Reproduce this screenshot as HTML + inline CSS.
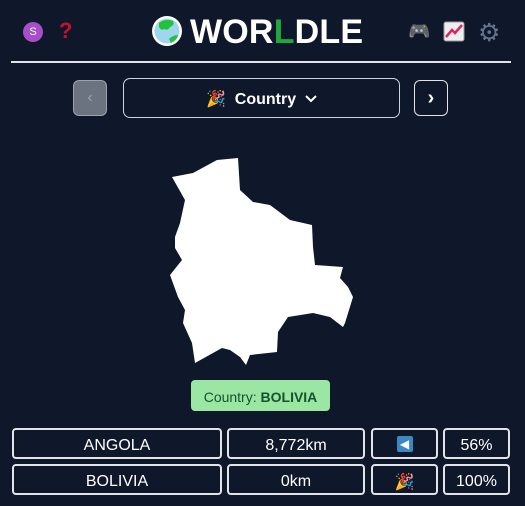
<!DOCTYPE html>
<html><head><meta charset="utf-8"><style>
*{box-sizing:border-box;margin:0;padding:0}
body{width:525px;height:506px;background:#0f172a;font-family:"Liberation Sans",sans-serif;color:#fff;position:relative;overflow:hidden}
.a{position:absolute}
.box{position:absolute;border:2px solid #e2e4e8;border-radius:4px;display:flex;align-items:center;justify-content:center;font-size:16px;padding-top:4px}
</style></head><body>
<div class="a" style="left:23px;top:22px;width:20px;height:20px;border-radius:50%;background:#a64fc8;font-size:11px;display:flex;align-items:center;justify-content:center">S</div>
<div class="a" style="left:59px;top:18px;font-size:22px;font-weight:bold;color:#c8102e">?</div>
<svg class="a" style="left:151px;top:15px" width="32" height="32" viewBox="0 0 32 32"><circle cx="16" cy="16" r="15" fill="#fff"/><circle cx="16" cy="16" r="12.5" fill="#9fd5ee"/><path d="M8 8 Q14 3 22 6 Q24 10 19 12 Q17 16 13 14 Q10 16 8 12Z" fill="#22c33a"/><path d="M18 24 Q22 20 27 20 Q26 25 20 28Z" fill="#22c33a"/></svg>
<div class="a" style="left:190px;top:13px;font-size:34px;font-weight:bold;letter-spacing:0.2px">WOR<span style="color:#1fa83e">L</span>DLE</div>
<div class="a" style="left:408px;top:21px;font-size:18px">🎮</div>
<svg class="a" style="left:443px;top:21px" width="22" height="21"><rect x="1" y="1" width="20" height="19" rx="2" fill="#eee" stroke="#999"/><path d="M3 16 L9 9 L12 12 L19 4" stroke="#e0245e" stroke-width="2.5" fill="none"/></svg>
<div class="a" style="left:478px;top:18px;font-size:25px;color:#64748b">⚙</div>
<div class="a" style="left:11px;top:61px;width:500px;height:2px;background:#e2e4e8"></div>
<div class="box" style="left:73px;top:80px;width:34px;height:36px;background:#6b7280;border-color:#9ca3af;color:#9ca3af;border-width:1px;border-radius:6px;padding:0">‹</div>
<div class="box" style="left:123px;top:78px;width:277px;height:40px;border-width:1px;border-color:#cbd5e1;border-radius:7px;font-weight:bold;font-size:16px;padding-top:2px">🎉&nbsp; Country &nbsp;<svg width="12" height="8"><path d="M1 1 L6 6 L11 1" stroke="#fff" stroke-width="2" fill="none"/></svg></div>
<div class="box" style="left:414px;top:80px;width:34px;height:36px;border-width:1px;border-radius:6px;font-size:20px;font-weight:bold;padding:0">›</div>
<svg class="a" style="left:0;top:0" width="525" height="400"><path fill="#fff" d="M172 177 L193 173 L217 160 L238 158 L240 190 L253 202 L270 205 L290 220 L312 225 L313 247 L315 265 L343 267 L340 278 L348 287 L353 297 L345 323 L343 327 L330 317 L313 313 L288 317 L278 332 L277 352 L250 355 L246 365 L240 357 L230 350 L222 348 L195 363 L192 343 L183 323 L185 310 L178 297 L170 275 L182 260 L175 248 L175 237 L180 223 L185 200Z"/></svg>
<div class="a" style="left:191px;top:380px;width:139px;height:31px;background:#9ae6a2;border-radius:4px;color:#14532d;font-size:14px;display:flex;align-items:center;justify-content:center;padding-top:2px">Country:&nbsp;<b>BOLIVIA</b></div>
<div class="box" style="left:12px;top:428px;width:210px;height:31px">ANGOLA</div>
<div class="box" style="left:227px;top:428px;width:138px;height:31px">8,772km</div>
<div class="box" style="left:371px;top:428px;width:67px;height:31px;padding-top:0"><span style="display:inline-block;width:16px;height:16px;background:#3b88c3;border-radius:2px;color:#fff;font-size:12px;line-height:16px;text-align:center">◀</span></div>
<div class="box" style="left:443px;top:428px;width:67px;height:31px">56%</div>
<div class="box" style="left:12px;top:464px;width:210px;height:31px">BOLIVIA</div>
<div class="box" style="left:227px;top:464px;width:138px;height:31px">0km</div>
<div class="box" style="left:371px;top:464px;width:67px;height:31px">🎉</div>
<div class="box" style="left:443px;top:464px;width:67px;height:31px">100%</div>
</body></html>
